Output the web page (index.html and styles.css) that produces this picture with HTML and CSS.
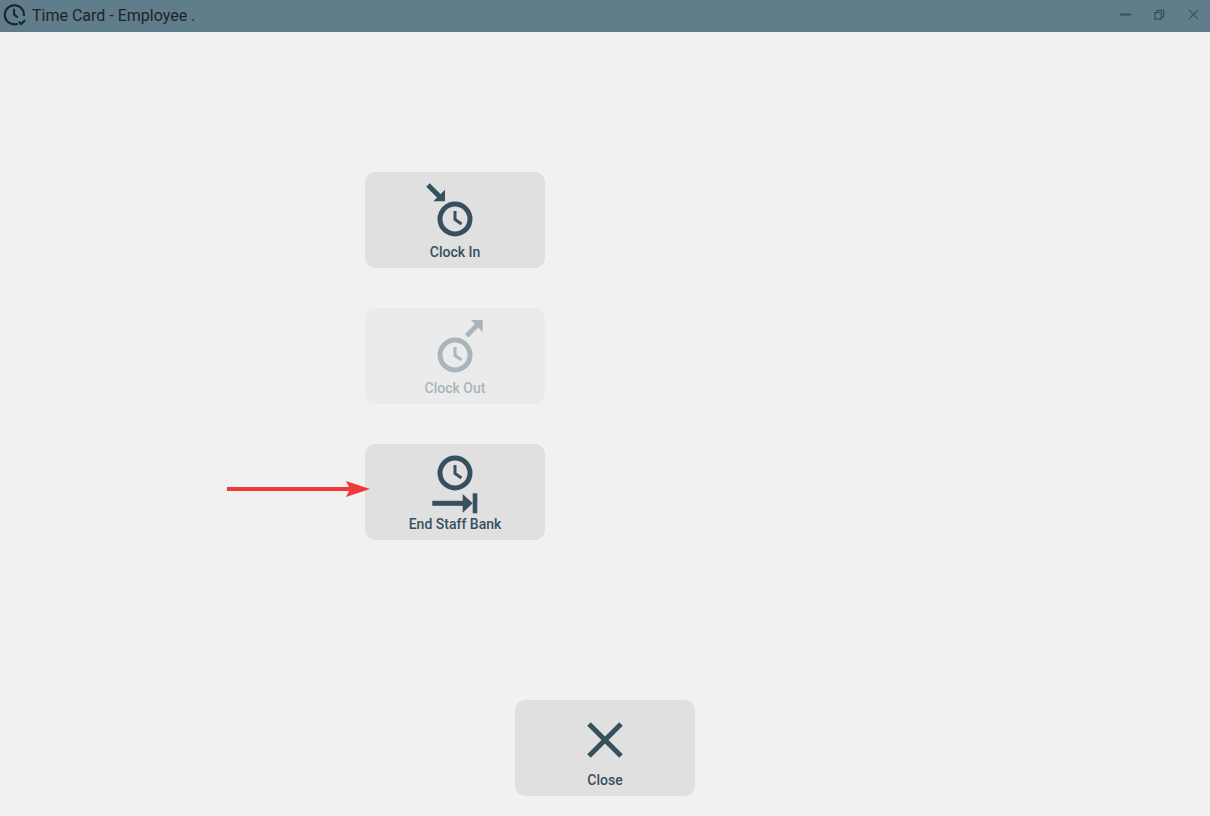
FILE: index.html
```html
<!DOCTYPE html>
<html lang="en">
	<head>
		<meta charset="UTF-8" />
		<meta name="viewport" content="width=device-width, initial-scale=1.0" />
		<title>Time Card - Employee .</title>
		<link rel="stylesheet" href="styles.css">
	</head>
	<body>
		<header class="title-bar">
			<svg class="title-icon" viewBox="0 0 24 24" aria-hidden="true">
				<path d="M15.5 21.6A10 10 0 1 1 21.8 13.5" class="line" />
				<path d="M11.5 6V12L15.5 15" class="line" />
				<path d="M16.5 19.5L19 22L23 18" class="line" />
			</svg>
			<span class="title-text">Time Card - Employee .</span>
			<div class="window-buttons">
				<button class="window-button">
					<svg viewBox="0 0 12 12"><path d="M0 6H12" class="win-line thick" /></svg>
				</button>
				<button class="window-button">
					<svg viewBox="0 0 12 12"><path d="M1 4H8V11H1ZM3.5 3.5V1.5H10.5V8.5H8.5" class="win-line" /></svg>
				</button>
				<button class="window-button">
					<svg viewBox="0 0 12 12"><path d="M1 1L11 11M11 1L1 11" class="win-line thin" /></svg>
				</button>
			</div>
		</header>

		<main class="content">
			<div class="action-list">
				<button class="action-button">
					<svg class="action-icon" viewBox="0 0 60 60" aria-hidden="true">
						<circle cx="30" cy="36" r="15" class="ring" />
						<path d="M30 28V36.5L36.5 41" class="hand" />
						<path d="M3 2L15 14" class="shaft" />
						<path d="M20 6.7V18.3H8.3Z" class="fill" />
					</svg>
					<span class="action-label">Clock In</span>
				</button>
				<button class="action-button disabled">
					<svg class="action-icon" viewBox="0 0 60 60" aria-hidden="true">
						<circle cx="30" cy="36" r="15" class="ring" />
						<path d="M30 28V36.5L36.5 41" class="hand" />
						<path d="M41.7 16.7L51.7 6.7" class="shaft" />
						<path d="M57.7 1V13.3L46 1Z" class="fill" />
					</svg>
					<span class="action-label">Clock Out</span>
				</button>
				<button class="action-button">
					<svg class="action-icon" viewBox="0 0 60 60" aria-hidden="true">
						<circle cx="30" cy="18" r="15" class="ring" />
						<path d="M30 10V18.5L36.5 23" class="hand" />
						<path d="M7.3 48.3H39" class="shaft" />
						<path d="M37.7 39V57.7L47.7 48.3Z" class="fill" />
						<path d="M47.7 38.3H52.3V58.3H47.7Z" class="fill" />
					</svg>
					<span class="action-label">End Staff Bank</span>
				</button>
			</div>

			<div class="footer-row">
				<button class="action-button">
					<svg class="action-icon" viewBox="0 0 60 60" aria-hidden="true">
						<path d="M14 13L46 45M46 13L14 45" class="shaft" />
					</svg>
					<span class="action-label">Close</span>
				</button>
			</div>
		</main>

		<!-- annotation drawn over the screenshot -->
		<svg class="red-arrow" viewBox="0 0 144 24" aria-hidden="true">
			<path d="M0 12H130" class="red-shaft" />
			<path d="M119 4L143 12L119 20L123 12Z" class="red-head" />
		</svg>
	</body>
</html>
```

FILE: styles.css
```css
* {
	margin: 0;
	padding: 0;
	box-sizing: border-box;
}

body {
	font-family: Roboto, Arial, sans-serif;
	background-color: #f1f1f1;
	display: flex;
	flex-direction: column;
	height: 100vh;
	overflow: hidden;
	position: relative;
}

.title-bar {
	height: 32px;
	flex: none;
	background: #607d8b;
	display: flex;
	align-items: center;
	padding: 0 0 2px 3px;
}

.title-icon {
	width: 23px;
	height: 23px;
	margin: 0 6px 1px 0;
}

.title-icon .line {
	fill: none;
	stroke: #1b2429;
	stroke-width: 2.2;
}

.title-text {
	font-size: 16px;
	color: #1e2428;
}

.window-buttons {
	margin: 0 0 2px auto;
	display: flex;
	gap: 23px;
	padding-right: 11px;
}

.window-button {
	width: 11px;
	height: 11px;
	background: none;
	border: none;
	display: flex;
}

.window-button svg {
	width: 11px;
	height: 11px;
}

.win-line {
	fill: none;
	stroke: #37505e;
	stroke-width: 1.5;
}

.win-line.thick {
	stroke-width: 2.2;
}

.win-line.thin {
	stroke-width: 1.2;
}

.content {
	flex: 1;
	display: flex;
	flex-direction: column;
	justify-content: space-between;
	padding: 140px 0 20px;
}

.action-list {
	display: flex;
	flex-direction: column;
	gap: 40px;
	padding-left: 365px;
}

.footer-row {
	display: flex;
	justify-content: center;
}

.action-button {
	width: 180px;
	height: 96px;
	background: #e0e0e0;
	border: none;
	border-radius: 10px;
	display: flex;
	flex-direction: column;
	align-items: center;
	padding-top: 11px;
	font-family: inherit;
	color: #37505e;
}

.action-button.disabled {
	background: #ebebeb;
	color: #a9b5bb;
}

.action-icon {
	width: 60px;
	height: 60px;
	flex: none;
}

.action-icon .ring {
	fill: none;
	stroke: currentColor;
	stroke-width: 5;
}

.action-icon .hand {
	fill: none;
	stroke: currentColor;
	stroke-width: 3;
}

.action-icon .shaft {
	fill: none;
	stroke: currentColor;
	stroke-width: 5;
}

.action-icon .fill {
	fill: currentColor;
}

.action-label {
	font-size: 14px;
	font-weight: 500;
	line-height: 16px;
	margin-top: 1px;
}

.red-arrow {
	position: absolute;
	left: 227px;
	top: 477px;
	width: 144px;
	height: 24px;
}

.red-shaft {
	fill: none;
	stroke: #f03a3a;
	stroke-width: 4;
}

.red-head {
	fill: #f03a3a;
}
```
